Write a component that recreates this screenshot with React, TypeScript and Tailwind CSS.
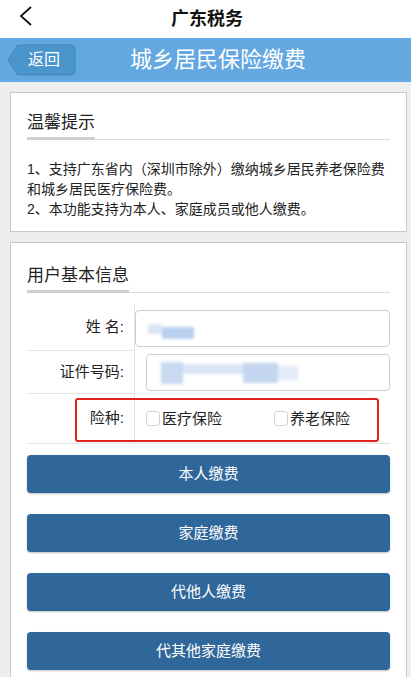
import React from "react";

const font = { fontFamily: '"Liberation Sans", "Noto Sans CJK SC", sans-serif' };

const SectionTitle = ({ text, bar }: { text: string; bar: string }) => (
  <div className="border-b border-[#dedede]">
    <div className="text-[17px] leading-[24px] text-[#222] pb-[2px]">{text}</div>
    <div className={`${bar} h-[3px] bg-[#cfcfcf] -mb-px`} />
  </div>
);

const Blur = ({ blocks }: { blocks: string[] }) => (
  <div className="flex items-center h-full blur-[1.5px]">
    {blocks.map((b, i) => (
      <div key={i} className={b} />
    ))}
  </div>
);

const Check = ({ label }: { label: string }) => (
  <div className="flex items-center whitespace-nowrap">
    <div className="shrink-0 w-[14px] h-[15px] rounded-[3px] border border-[#d4d4d4] bg-white" />
    <span className="ml-[2px] text-[15px] leading-[20px] text-[#222]">{label}</span>
  </div>
);

const buttons = ["本人缴费", "家庭缴费", "代他人缴费", "代其他家庭缴费"];

export default function App() {
  return (
    <div className="w-[411px] h-[677px] overflow-hidden bg-[#eeeeee]" style={font}>
      <div className="relative h-[38px] bg-white flex items-center justify-center">
        <svg className="absolute left-[19px] top-[6px]" width="14" height="20" viewBox="0 0 14 20">
          <polyline points="12,1 2,10 12,19" fill="none" stroke="#111" strokeWidth="1.8" />
        </svg>
        <span className="text-[18px] font-bold text-[#111] leading-none ml-[3px]">广东税务</span>
      </div>

      <div className="h-[44px] bg-[#63a8e1] flex items-center">
        <div className="relative ml-[7px] h-[32px] w-[69px] flex items-center">
          <svg className="absolute inset-0" width="69" height="32" viewBox="0 0 69 32">
            <path d="M10.5 1 H65 a3 3 0 0 1 3 3 V28 a3 3 0 0 1 -3 3 H10.5 L1 16 Z" fill="#4a95cb" stroke="#4389bd" strokeWidth="1" />
          </svg>
          <span className="relative pl-[21px] text-[16px] leading-none text-white">返回</span>
        </div>
        <div className="ml-[54px] text-[22px] leading-none text-white">城乡居民保险缴费</div>
      </div>

      <div className="ml-[10px] mr-[4px] mt-[10px] bg-white border border-[#c8c8c8] px-[16px] pt-[18px] pb-[12px]">
        <SectionTitle text="温馨提示" bar="w-[68px]" />
        <div className="mt-[19px] text-[14px] leading-[20px] text-[#222] whitespace-nowrap">
          1、支持广东省内（深圳市除外）缴纳城乡居民养老保险费
          <br />
          和城乡居民医疗保险费。
          <br />
          2、本功能支持为本人、家庭成员或他人缴费。
        </div>
      </div>

      <div className="ml-[10px] mr-[4px] mt-[10px] bg-white border border-[#c8c8c8] px-[16px] pt-[21px] pb-[20px]">
        <SectionTitle text="用户基本信息" bar="w-[102px]" />

        <div className="mt-[12px] grid grid-cols-[108px_1fr]">
          <div className="h-[46px] border-b border-r border-[#e2e2e2] flex items-center justify-end pr-[10px] text-[15px] text-[#222]">
            姓&nbsp;名:
          </div>
          <div className="h-[46px] flex items-start pt-[5px]">
            <div className="w-full h-[37px] rounded-[4px] border border-[#cfcfcf] bg-white">
              <Blur
                blocks={[
                  "ml-[12px] w-[14px] h-[10px] bg-[#dbe6f5]",
                  "w-[32px] h-[12px] bg-[#b9cfee] mt-[8px]",
                ]}
              />
            </div>
          </div>

          <div className="h-[43px] border-b border-r border-[#e2e2e2] flex items-center justify-end pr-[10px] text-[15px] text-[#222]">
            证件号码:
          </div>
          <div className="h-[43px] flex items-start pt-[3px] pl-[11px]">
            <div className="w-full h-[37px] rounded-[4px] border border-[#cfcfcf] bg-white">
              <Blur
                blocks={[
                  "ml-[14px] w-[22px] h-[22px] bg-[#c9d9f1]",
                  "w-[60px] h-[10px] bg-[#dae5f6] -mt-[8px]",
                  "w-[35px] h-[20px] bg-[#c4d6f0]",
                  "w-[20px] h-[14px] bg-[#e3ebf8]",
                ]}
              />
            </div>
          </div>

          <div className="relative col-span-2 h-[50px] border-b border-[#e2e2e2] grid grid-cols-[108px_1fr]">
            <div className="border-r border-[#e2e2e2] flex items-center justify-end pr-[10px] text-[15px] text-[#222]">
              险种:
            </div>
            <div className="flex items-center pl-[11px] gap-[52px]">
              <Check label="医疗保险" />
              <Check label="养老保险" />
            </div>
            <div className="absolute left-[48px] top-[4px] w-[304px] h-[44px] rounded-[3px] border-[2.5px] border-[#e3201d]" />
          </div>
        </div>

        <div className="mt-[11px] flex flex-col gap-[21px]">
          {buttons.map((b) => (
            <div
              key={b}
              className="h-[38px] rounded-[4px] bg-[#2f679b] shadow-[0_1px_2px_rgba(0,0,0,0.25)] flex items-center justify-center text-[15px] text-white"
            >
              {b}
            </div>
          ))}
        </div>
      </div>
    </div>
  );
}
